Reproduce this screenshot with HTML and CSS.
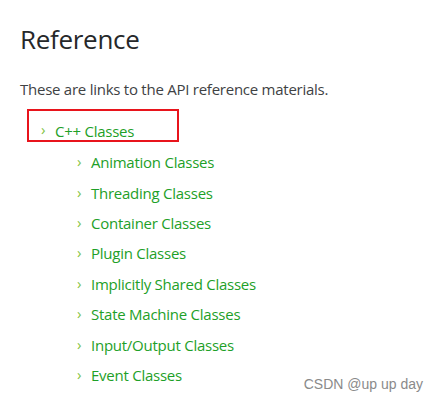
FILE: index.html
```html
<!DOCTYPE html>
<html>
<head>
<meta charset="utf-8">
<link rel="stylesheet" href="styles.css">
</head>
<body>
<main class="page">
  <h1 class="title">Reference</h1>
  <p class="intro">These are links to the API reference materials.</p>
  <ul class="tree">
    <li class="top">
      <div class="top-row"><span class="chev">›</span><a href="#">C++ Classes</a></div>
      <ul class="sub">
        <li><span class="chev">›</span><a href="#">Animation Classes</a></li>
        <li><span class="chev">›</span><a href="#">Threading Classes</a></li>
        <li><span class="chev">›</span><a href="#">Container Classes</a></li>
        <li><span class="chev">›</span><a href="#">Plugin Classes</a></li>
        <li><span class="chev">›</span><a href="#">Implicitly Shared Classes</a></li>
        <li><span class="chev">›</span><a href="#">State Machine Classes</a></li>
        <li><span class="chev">›</span><a href="#">Input/Output Classes</a></li>
        <li><span class="chev">›</span><a href="#">Event Classes</a></li>
      </ul>
    </li>
  </ul>
  <div class="mark">CSDN @up up day</div>
</main>
</body>
</html>
```
FILE: styles.css
```css
html, body { margin: 0; padding: 0; background: #fff; }
.page {
  position: relative;
  width: 437px;
  height: 402px;
  padding: 0 0 0 20px;
  box-sizing: border-box;
  font-family: "Open Sans", sans-serif;
  color: #404244;
}
.title {
  margin: 0;
  padding-top: 23px;
  font-size: 26px;
  font-weight: 400;
  line-height: 32px;
  letter-spacing: -0.3px;
  color: #26282a;
}
.intro {
  margin: 24px 0 0;
  font-size: 15px;
  line-height: 20px;
  letter-spacing: -0.25px;
}
.tree, .sub { list-style: none; margin: 0; padding: 0; }
.top-row {
  display: flex;
  align-items: center;
  width: 136px;
  height: 21px;
  margin: 10px 0 0 7px;
  padding: 8px 0 0 12px;
  border: 2px solid #e8141c;
  box-sizing: content-box;
}
.chev {
  color: #80c342;
  font-size: 15px;
  width: 14px;
  flex: none;
  position: relative;
  top: -1px;
}
a {
  color: #1ea028;
  text-decoration: none;
  font-size: 15px;
  letter-spacing: -0.25px;
}
.top-row a { position: relative; top: 1px; }
.sub { margin: 5px 0 0 57px; }
.sub li {
  display: flex;
  align-items: center;
  height: 30.4px;
}
.mark {
  position: absolute;
  right: 14px;
  bottom: 10px;
  font-family: "Liberation Sans", Arial, sans-serif;
  font-size: 14px;
  color: #8a8a8a;
}
```
